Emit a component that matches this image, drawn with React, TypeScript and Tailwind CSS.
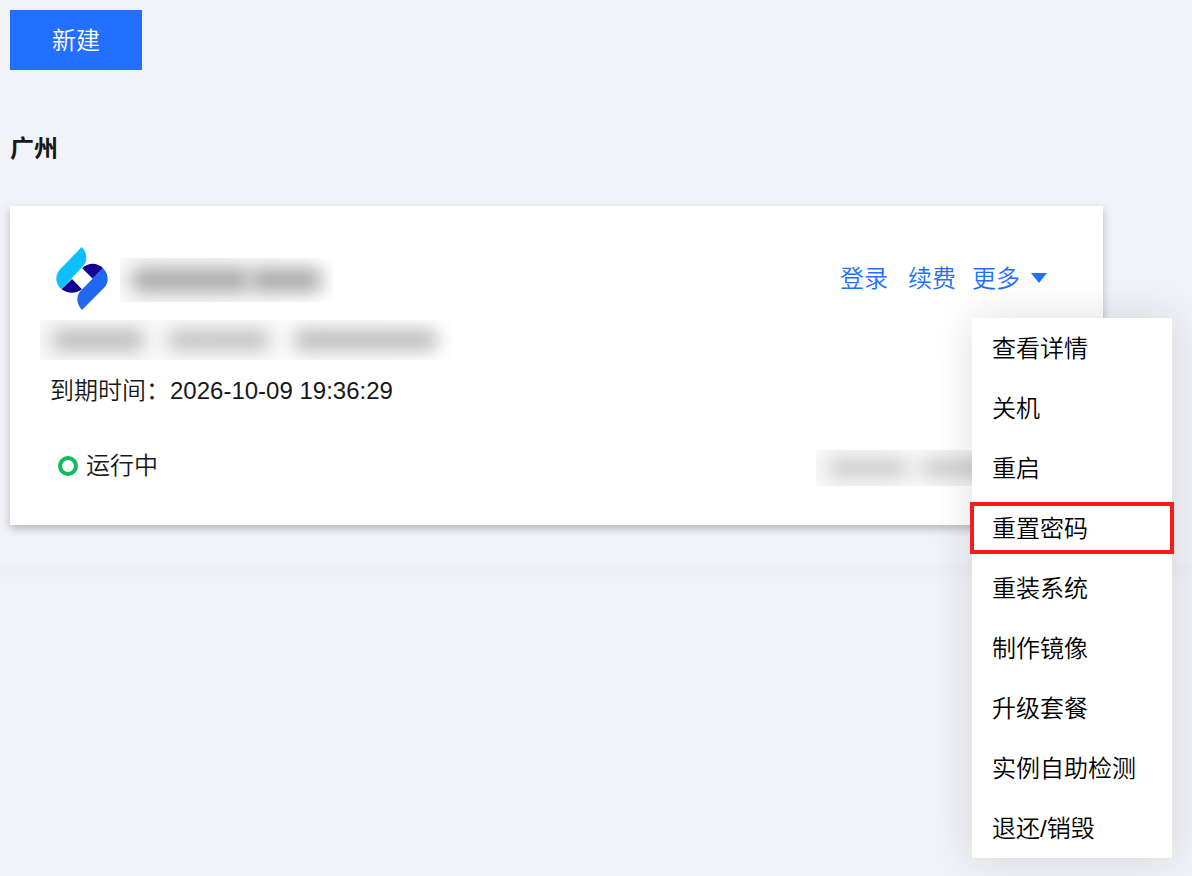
import { clsx } from "clsx";

const menuItems = [
    { label: "查看详情" },
    { label: "关机" },
    { label: "重启" },
    { label: "重置密码", highlighted: true },
    { label: "重装系统" },
    { label: "制作镜像" },
    { label: "升级套餐" },
    { label: "实例自助检测" },
    { label: "退还/销毁" },
];

const Logo = () => {
    return (
        <svg viewBox="48 30 154 189" className="h-[63px] w-[52px]" aria-hidden="true">
            <path d="M124 30C133 39 138 49 138 62C138 68 137 73 134 79C131 84 127 89 122 94L64 157C53 147 48 137 48 125C48 114 52 104 61 95Z" fill="#0cc0ff" />
            <path d="M126 94C142 76 172 76 188 94L157 125Z" fill="#130095" />
            <path d="M64 157L95 126L125 157C108 171 81 171 64 157Z" fill="#130095" />
            <path d="M188 94C197 103 202 113 202 126C202 137 198 146 190 154L125 219C116 209 111 199 111 187C111 175 116 166 124 158Z" fill="#2069ee" />
        </svg>
    );
};

const InstanceMenu = () => {
    return (
        <ul className="absolute left-0 top-full z-10 mt-[21px] w-[200px] bg-white text-black shadow-[0_0_40px_rgba(30,30,50,0.14)]">
            {menuItems.map((item) => (
                <li key={item.label} className="relative">
                    <button type="button" className="h-15 w-full px-5 pt-0.5 text-left">
                        {item.label}
                    </button>
                    {item.highlighted && (
                        <span className="pointer-events-none absolute -inset-x-0.5 top-1 bottom-1 border-4 border-[#f41c1c]" />
                    )}
                </li>
            ))}
        </ul>
    );
};

// Hides private values behind a soft smudge, one bar per word
const Masked = ({ className, bars }: { className: string; bars: string[] }) => {
    return (
        <div
            className={clsx("flex items-center overflow-hidden bg-linear-to-r from-[#f8f8f8] via-[#fafafa] to-white", className)}
            aria-hidden="true"
        >
            {bars.map((bar, i) => (
                <span key={i} className={clsx("shrink-0 rounded-lg blur-[9px]", bar)} />
            ))}
        </div>
    );
};

const InstanceCard = () => {
    return (
        <article className="bg-white py-10 pr-10 pl-[30px] shadow-[0_4px_8px_rgba(40,45,60,0.3)]">
            <div className="flex h-16 items-center justify-between">
                <div className="flex items-center pl-4">
                    <Logo />
                    <Masked
                        className="mt-1 ml-3 h-11 w-[214px] pl-3"
                        bars={["h-6 w-[118px] bg-[#a8a8a8]", "h-6 w-[72px] bg-[#a8a8a8]"]}
                    />
                </div>
                <div className="flex items-center pt-0.5 pr-4 text-[#236fff]">
                    <a href="#login" className="mr-5">登录</a>
                    <a href="#renew" className="mr-4">续费</a>
                    <div className="relative">
                        <button type="button" className="flex items-center gap-[11px]">
                            更多
                            <svg viewBox="0 0 16 12" className="h-3 w-4" aria-hidden="true">
                                <path d="M0 0h16L8 10z" fill="currentColor" />
                            </svg>
                        </button>
                        <InstanceMenu />
                    </div>
                </div>
            </div>
            <Masked
                className="mt-2.5 h-10 w-[412px] gap-6 pl-3"
                bars={["h-5 w-[92px] bg-[#b8b8b8]", "h-5 w-[102px] bg-[#c0c0c0]", "h-5 w-[144px] bg-[#b8b8b8]"]}
            />
            <p className="mt-[13px] pl-2.5 text-[#181818]">
                到期时间：2026-10-09 19:36:29
            </p>
            <div className="mt-[38px] flex h-[38px] items-center justify-between pl-4.5 text-[#181818]">
                <div className="flex items-center gap-2">
                    <span className="size-5 rounded-full border-4 border-[#0abf5b]" />
                    运行中
                </div>
                <Masked
                    className="mt-1 h-9 w-[247px] gap-3 pl-3"
                    bars={["h-5 w-[80px] bg-[#cccccc]", "h-5 w-[120px] bg-[#cccccc]"]}
                />
            </div>
        </article>
    );
};

const App = () => {
    return (
        <main className="min-h-screen bg-[#f2f3f8] font-['Liberation_Sans','Noto_Sans_CJK_SC',sans-serif] text-2xl/9 font-[350]">
            <div className="pt-2.5 pr-[89px] pb-10 pl-2.5">
                <button type="button" className="h-15 bg-[#236fff] px-[42px] pt-0.5 text-white">
                    新建
                </button>
                <h2 className="mt-[61px] mb-[39px] font-bold text-[#181818]">广州</h2>
                <InstanceCard />
            </div>
            <div className="h-5 bg-linear-to-b from-[#eeeff4] to-[#f2f3f8]" />
        </main>
    );
};

export default App;
